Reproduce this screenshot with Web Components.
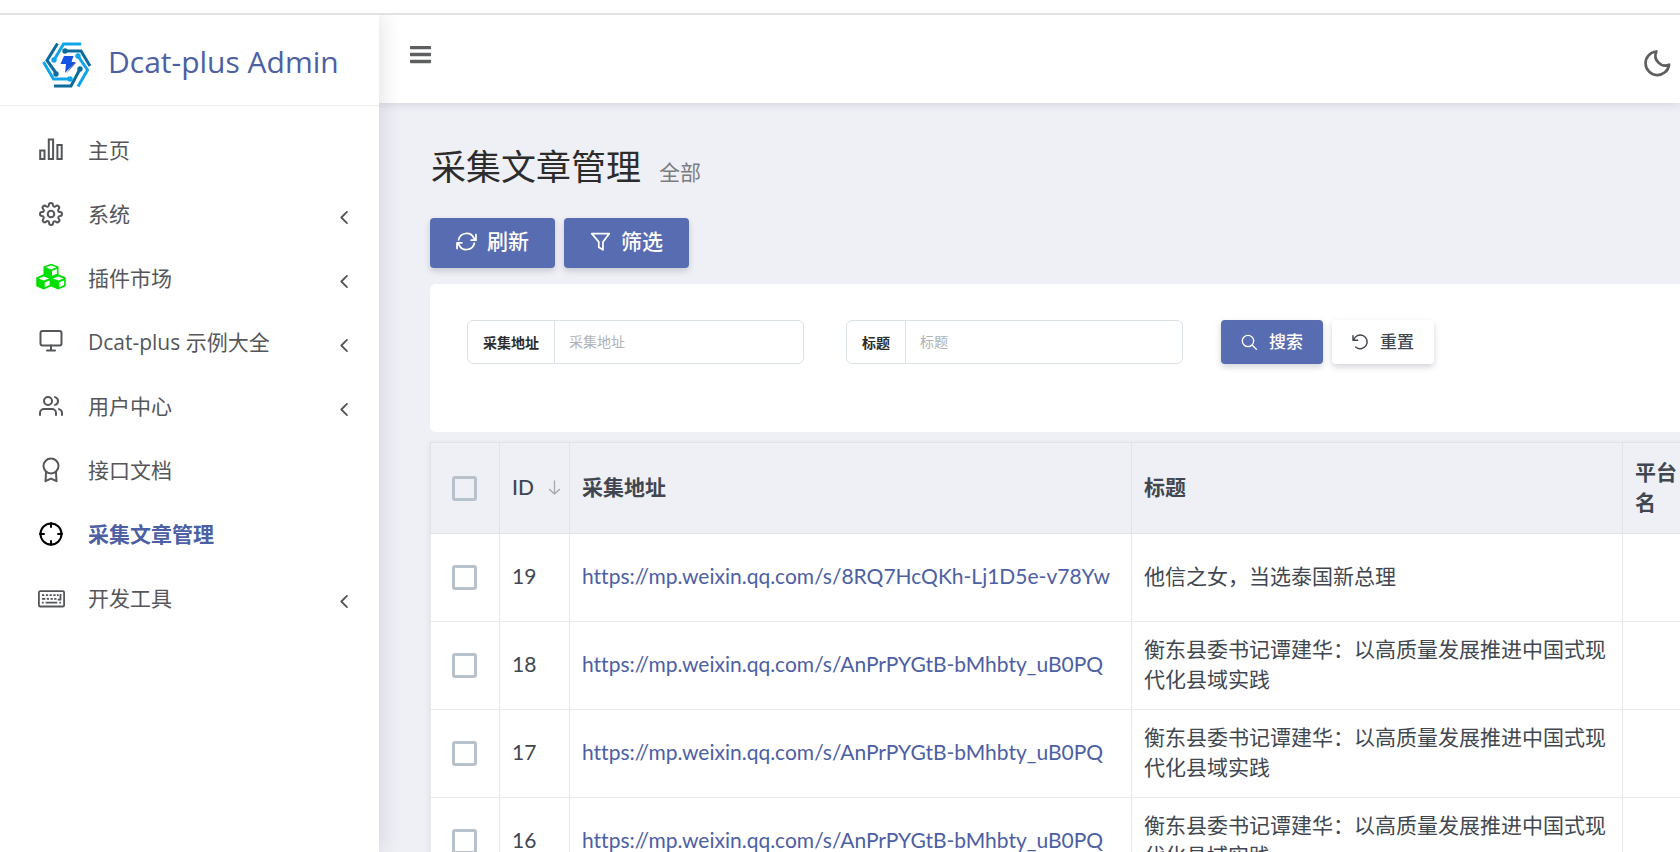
<!DOCTYPE html>
<html lang="zh-CN">
<head>
<meta charset="utf-8">
<title>Dcat-plus Admin</title>
<style>
html, body { margin: 0; height: 100%; }
body { font-family: "Lato", "Noto Sans CJK SC", sans-serif; background: #eff0f6; overflow: hidden; }
</style>
</head>
<body>
<admin-app></admin-app>
<script>
const FONT = '"Lato", "Noto Sans CJK SC", sans-serif';
const BRAND_FONT = '"Open Sans", "Noto Sans CJK SC", sans-serif';
const stroke = (body, w = 2) => `<g fill="none" stroke="currentColor" stroke-width="${w}" stroke-linecap="round" stroke-linejoin="round">${body}</g>`;
const ICONS = {
  bars: `<g fill="currentColor"><rect x="1" y="3" width="22" height="3.600" rx=".8"/><rect x="1" y="10.200" width="22" height="3.600" rx=".8"/><rect x="1" y="17.400" width="22" height="3.600" rx=".8"/></g>`,
  chart: `<g fill="none" stroke="currentColor" stroke-width="2"><path d="M1.200 12.500h4.300v8.500h-4.300zM9.800 1.500h4.300v19.500h-4.300zM18.400 7h4.300v14h-4.300z"/></g>`,
  gear: stroke(`<circle cx="12" cy="12" r="3.300"/><path d="M19.400 15a1.650 1.650 0 0 0 .33 1.820l.06.06a2 2 0 0 1-2.830 2.830l-.06-.06a1.650 1.650 0 0 0-2.800 1.170V21a2 2 0 0 1-4 0v-.09A1.650 1.650 0 0 0 7.200 19.700l-.06.06a2 2 0 0 1-2.830-2.830l.06-.06A1.650 1.650 0 0 0 3.100 14.100H3a2 2 0 0 1 0-4h.09A1.650 1.650 0 0 0 4.300 7.200l-.06-.06a2 2 0 0 1 2.830-2.830l.06.06A1.650 1.650 0 0 0 9.900 3.100V3a2 2 0 0 1 4 0v.09a1.650 1.650 0 0 0 2.800 1.200l.06-.06a2 2 0 0 1 2.830 2.830l-.06.06a1.650 1.650 0 0 0 1.300 2.780H21a2 2 0 0 1 0 4h-.09a1.650 1.650 0 0 0-1.510 1.100z"/>`, 2),
  cubes: `<path fill="currentColor" d="M12 .5l6 2.300v6.200l5.800 2.600v6.900l-6 2.700-5.800-2.500-5.800 2.500-6-2.700v-6.900L6 9V2.800z"/><g fill="#fff"><path d="M12 1.900l4.300 1.500L12 5.100 7.700 3.400z"/><path d="M6.200 10.700l4.300 1.600-4.300 1.700-4.300-1.700z"/><path d="M17.800 10.700l4.300 1.600-4.300 1.700-4.300-1.700z"/><path d="M12.800 6.300l3.900-1.500v3.800l-3.900 1.500z"/><path d="M7 15.400l3.900-1.500v3.800L7 19.400z"/><path d="M18.600 15.400l3.900-1.500v3.800l-3.900 1.700z"/></g>`,
  monitor: stroke(`<rect x="1.500" y="1" width="21" height="14.500" rx="2"/><path d="M8 20.500h8M12 15.500v5"/>`, 2),
  users: stroke(`<path d="M17 21v-2a4 4 0 0 0-4-4H5a4 4 0 0 0-4 4v2"/><circle cx="9" cy="7" r="4"/><path d="M23 21v-2a4 4 0 0 0-3-3.870M16 3.130a4 4 0 0 1 0 7.750"/>`),
  award: stroke(`<circle cx="12" cy="8" r="7.500"/><path d="M7 14.500L6.500 23.200l5.500-2.600 5.500 2.600-.5-8.700"/>`, 2),
  cross: stroke(`<circle cx="12" cy="12" r="10.500"/><path d="M23 12h-4M5 12H1M12 5V1M12 23v-4"/>`),
  keyboard: `<g fill="none" stroke="currentColor" stroke-width="1.600"><rect x=".8" y="5.500" width="22.400" height="13.600" rx="1.200"/><path d="M3.500 9h2m1.500 0h2m1.300 0h2m1.300 0h2m1.300 0h1.500M3.500 12.300h3m1.300 0h2m1.300 0h2m1.300 0h2M20 8v5h-2.500M3.500 15.700h1.500m1.800 0h10.400m1.800 0h1.500"/></g>`,
  angle: stroke(`<path d="M15.500 4l-8 8 8 8"/>`, 2.600),
  moon: stroke(`<path d="M22.300 14A10.500 10.500 0 1 1 11 2.200a8.800 8.800 0 0 0 11.300 11.800z"/>`, 2.400),
  refresh: stroke(`<path d="M3 10a9.300 9.300 0 0 1 17.500-1.800l2 2.300M22.800 4v6.500h-5.500M21 14A9.300 9.300 0 0 1 3.500 15.800l-2-2.300M1.200 20v-6.500h5.500"/>`, 2),
  filter: stroke(`<path d="M2 3h20L14.800 12.500V21.500l-4.800-3v-6z"/>`, 2),
  search: stroke(`<circle cx="10.500" cy="10.500" r="8.500"/><path d="M23 23l-6-6"/>`),
  undo: stroke(`<path d="M1.500 2.500v7h7"/><path d="M2.500 9A10.300 10.300 0 1 1 5.500 19.500"/>`, 2.200),
  down: stroke(`<path d="M12 1.500v21M4 15l8 7.500 8-7.500"/>`, 2.200)
};

function define(name, markup) {
  customElements.define(name, class extends HTMLElement {
    connectedCallback() {
      if (this.shadowRoot) return;
      const root = this.attachShadow({ mode: 'open' });
      const template = document.createElement('template');
      template.innerHTML = typeof markup === 'function' ? markup(this) : markup;
      root.append(template.content.cloneNode(true));
    }
  });
}

define('ui-icon', el => `
<style>
:host { display: inline-block; flex: none; width: var(--icon-size, 24px); height: var(--icon-size, 24px); }
svg { display: block; width: 100%; height: 100%; overflow: visible; }
</style>
<svg viewBox="0 0 24 24" aria-hidden="true">${ICONS[el.getAttribute('name')] || ''}</svg>`);

define('brand-logo', `
<style>
:host { display: block; border-bottom: 1px solid #eeeff1; }
a { display: flex; align-items: center; gap: 16px; height: 90px; padding: 10px 0 0 42px; color: #4c60a3; text-decoration: none; font: 30px/36px ${BRAND_FONT}; white-space: nowrap; box-sizing: border-box; }
svg { flex: none; width: 50px; height: 46px; }
span { padding-bottom: 6px; }
</style>
<a href="#">
<svg viewBox="0 0 50 46" aria-hidden="true">
<g fill="none" stroke-width="3">
<path stroke="#0d6c9c" d="M15.500 1.500L5 18.500 14 31M23 9h16l9 15M38 27L29 44H12"/>
<path stroke="#10a5ea" d="M39 2H21.500L12 18M36 14l9.500 14-9.500 16.500M1.500 20l10 17H28"/>
</g>
<g fill="#0d6c9c"><circle cx="23" cy="9" r="2.700"/><circle cx="14" cy="32" r="2.700"/><circle cx="38" cy="27" r="2.700"/></g>
<g fill="#10a5ea"><circle cx="12" cy="18" r="2.700"/><circle cx="36" cy="14" r="2.700"/><circle cx="28" cy="37" r="2.700"/></g>
<path fill="#777" d="M24 32l10-11-2-1z"/><path fill="#1453e4" d="M22 14h9.500l-2 6h4L23 31l1-9h-5.500z"/>
</svg>
<span>Dcat-plus Admin</span></a>`);

define('menu-item', el => `
<style>
:host { display: block; color: #55565a; }
:host([active]) { color: #4c60a3; font-weight: 700; }
a { display: flex; align-items: center; height: 64px; padding: 0 26px 0 39px; color: inherit; text-decoration: none; font-family: ${BRAND_FONT}; font-size: 21px; line-height: 32px; }
.glyph { display: flex; justify-content: center; width: 24px; margin-right: 25px; color: var(--glyph, #55565a); --icon-size: var(--glyph-size, 24px); }
.label { flex: 1; }
.angle { --icon-size: 17px; margin-top: 6px; }
</style>
<a href="#"><span class="glyph"><ui-icon name="${el.getAttribute('icon')}"></ui-icon></span>
<span class="label"><slot></slot></span>
${el.hasAttribute('tree') ? '<ui-icon class="angle" name="angle"></ui-icon>' : ''}</a>`);

define('side-bar', `
<style>
:host { display: flex; flex-direction: column; flex: none; width: 379px; background: #fff; box-shadow: 0 0 22px rgba(40,45,70,.16); position: relative; z-index: 1; }
nav { padding-top: 12px; }
.market { --glyph: #00e000; --glyph-size: 30px; }
.current { --glyph: #000; }
.wide { --glyph-size: 27px; }
</style>
<brand-logo></brand-logo>
<nav>
<menu-item icon="chart">主页</menu-item>
<menu-item icon="gear" tree>系统</menu-item>
<menu-item icon="cubes" tree class="market">插件市场</menu-item>
<menu-item icon="monitor" tree>Dcat-plus 示例大全</menu-item>
<menu-item icon="users" tree>用户中心</menu-item>
<menu-item icon="award">接口文档</menu-item>
<menu-item icon="cross" active class="current">采集文章管理</menu-item>
<menu-item icon="keyboard" tree class="wide">开发工具</menu-item>
</nav>`);

define('top-bar', `
<style>
:host { display: flex; justify-content: space-between; height: 88px; padding: 0 9px 0 30px; background: #fff; box-shadow: 0 2px 8px rgba(40,45,70,.12); box-sizing: border-box; }
button { border: 0; padding: 0; background: none; color: #5e5f61; height: 24px; }
.menu { margin-top: 28px; --icon-size: 23px; }
.dark { margin-top: 34px; --icon-size: 27px; }
</style>
<button class="menu" aria-label="菜单"><ui-icon name="bars"></ui-icon></button>
<button class="dark" aria-label="深色模式"><ui-icon name="moon"></ui-icon></button>`);

define('ui-button', el => `
<style>
:host { display: inline-block; --icon-size: 21px; }
button { display: flex; align-items: center; gap: 10px; height: 50px; padding: 0 26px 4px; border: 0; border-radius: 4px; background: #586cb1; color: #fff; font: 500 21px/30px ${FONT}; box-shadow: 0 3px 6px rgba(40,45,70,.2); white-space: nowrap; }
:host([small]) { --icon-size: 16px; }
:host([small]) button { gap: 12px; height: 44px; padding: 0 20px; font-size: 17px; line-height: 24px; }
:host([plain]) button { background: #fff; color: #414750; }
</style>
<button type="button"><ui-icon name="${el.getAttribute('icon')}"></ui-icon><slot></slot></button>`);

define('filter-field', el => `
<style>
:host { display: flex; width: 337px; height: 44px; border: 1px solid #dbe2e7; border-radius: 6px; box-sizing: border-box; background: #fff; }
label { display: flex; align-items: center; padding: 0 15px; border-right: 1px solid #dbe2e7; color: #2c2c2c; font-size: 14px; font-weight: 700; white-space: nowrap; }
input { flex: 1; min-width: 0; border: 0; padding: 0 14px; outline: 0; background: none; font: 14px/20px ${FONT}; }
input::placeholder { color: #afb1b5; }
</style>
<label for="f">${el.getAttribute('label')}</label><input id="f" type="text" placeholder="${el.getAttribute('label')}">`);

define('filter-panel', `
<style>
:host { display: block; background: #fff; border-radius: 6px 0 0 6px; padding: 36px 37px 68px; }
form { display: flex; align-items: center; }
filter-field + filter-field { margin-left: 42px; }
.actions { display: flex; gap: 9px; margin-left: 38px; }
</style>
<form>
<filter-field label="采集地址"></filter-field>
<filter-field label="标题"></filter-field>
<div class="actions"><ui-button small icon="search">搜索</ui-button><ui-button small plain icon="undo">重置</ui-button></div>
</form>`);

const LONG = '衡东县委书记谭建华：以高质量发展推进中国式现代化县域实践';
const AN = 'https://mp.weixin.qq.com/s/AnPrPYGtB-bMhbty_uB0PQ';
const ROWS = [
  [19, 'https://mp.weixin.qq.com/s/8RQ7HcQKh-Lj1D5e-v78Yw', '他信之女，当选泰国新总理'],
  [18, AN, LONG], [17, AN, LONG], [16, AN, LONG]
];

define('article-table', `
<style>
:host { display: block; background: #fff; box-shadow: 0 2px 6px rgba(40,45,70,.1); }
table { width: 100%; table-layout: fixed; border-collapse: collapse; color: #414750; font-size: 21px; line-height: 30px; font-variant-ligatures: none; }
th, td { border: 1px solid #e8e9eb; padding: 0 0 0 12px; text-align: left; }
td { padding-bottom: 4px; height: 83px; }
th { background: #eff0f6; padding-bottom: 2px; height: 88px; border-color: #e1e3e6; font-weight: 700; }
th:last-child, td:last-child { border-right: 0; }
th:first-child, td:first-child { padding-left: 21px; }
.check { width: 47px; }
.id { width: 57px; }
.url { width: 549px; }
.platform { width: 45px; }
.id span { display: flex; align-items: center; gap: 13px; font-weight: 500; --icon-size: 15px; }
.id ui-icon { color: #a9abb0; }
.title { padding-right: 12px; }
a { color: #4c60a3; text-decoration: none; white-space: nowrap; }
input { display: block; appearance: none; width: 25px; height: 25px; margin: 3px 0 0; border: 3px solid #b8c2cc; border-radius: 3px; background: transparent; box-sizing: border-box; }
</style>
<table>
<thead><tr><th class="check"><input type="checkbox" aria-label="全选"></th><th class="id"><span>ID<ui-icon name="down"></ui-icon></span></th><th class="url">采集地址</th><th class="title">标题</th><th class="platform">平台名</th></tr></thead>
<tbody>${ROWS.map(([id, url, title]) => `<tr><td><input type="checkbox" aria-label="${id}"></td><td>${id}</td><td><a href="${url}">${url}</a></td><td class="title">${title}</td><td></td></tr>`).join('')}</tbody>
</table>`);

define('admin-app', `
<style>
:host { display: flex; flex-direction: column; height: 100vh; overflow: hidden; font-family: ${FONT}; }
.strip { flex: none; height: 13px; background: #fff; border-bottom: 2px solid #e2e2e3; position: relative; z-index: 2; }
.shell { display: flex; flex: 1; min-height: 0; }
main { flex: 1; min-width: 0; }
.content { padding: 40px 0 0 51px; }
header { display: flex; align-items: baseline; gap: 18px; padding-left: 1px; }
h1 { margin: 0; font-size: 35px; line-height: 46px; font-weight: 400; color: #2c2c2c; }
small { font-size: 21px; line-height: 30px; color: #7b7c80; }
.tools { display: flex; gap: 9px; margin: 29px 0 16px; }
article-table { margin-top: 10px; }
</style>
<div class="strip"></div>
<div class="shell">
<side-bar></side-bar>
<main><top-bar></top-bar>
<div class="content">
<header><h1>采集文章管理</h1><small>全部</small></header>
<div class="tools"><ui-button icon="refresh">刷新</ui-button><ui-button icon="filter">筛选</ui-button></div>
<filter-panel></filter-panel>
<article-table></article-table>
</div></main>
</div>`);
</script>
</body>
</html>
